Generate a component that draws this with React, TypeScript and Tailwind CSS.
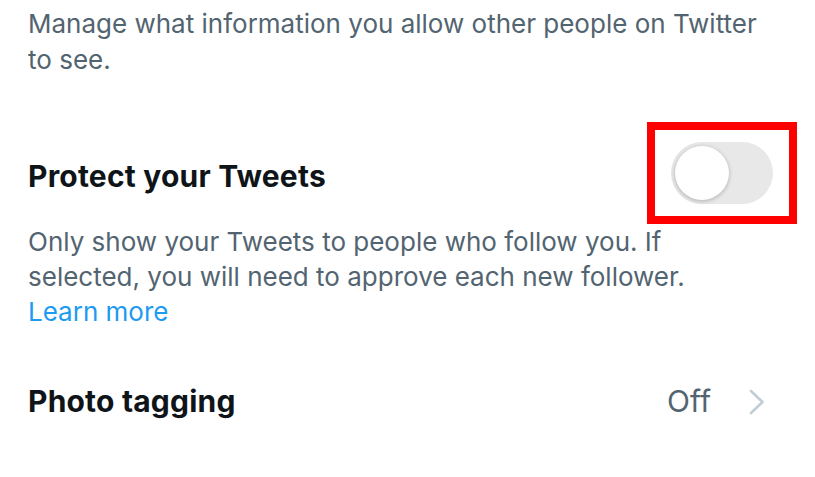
function Toggle() {
  return (
    <div className="mb-[6px] border-[8px] border-[#ff0000] px-[16px] py-[12px]">
      <div className="flex h-[62px] w-[102px] items-center rounded-full bg-[#e8e8e8] pl-[4px]">
        <div className="h-[54px] w-[54px] rounded-full bg-white shadow-[0_1px_4px_rgba(0,0,0,0.25)]" />
      </div>
    </div>
  );
}

function Chevron() {
  return (
    <svg width="16" height="26" viewBox="0 0 16 26" fill="none" className="text-[#c0ced6]">
      <polyline points="2,2 13.5,13 2,24" stroke="currentColor" strokeWidth="2.6" strokeLinecap="round" strokeLinejoin="round" />
    </svg>
  );
}

export default function App() {
  return (
    <div className="h-[477px] w-[815px] overflow-hidden bg-white font-['Inter',sans-serif] text-[#0f1419]">
      <p className="px-[28px] pt-[6px] text-[26px] leading-[36px] text-[#536471]">
        Manage what information you allow other people on Twitter
        <br />
        to see.
      </p>

      <div className="mt-[44px] flex items-center justify-between pl-[28px] pr-[18px]">
        <h2 className="text-[30px] font-bold tracking-[0.2px]">Protect your Tweets</h2>
        <Toggle />
      </div>

      <p className="mt-[-6px] px-[28px] text-[26px] leading-[35px] text-[#536471]">
        Only show your Tweets to people who follow you. If
        <br />
        selected, you will need to approve each new follower.
        <br />
        <a className="text-[#1d9bf0]">Learn more</a>
      </p>

      <div className="mt-[50px] flex items-center justify-between pl-[28px] pr-[50px]">
        <h2 className="text-[30px] font-bold tracking-[0.2px]">Photo tagging</h2>
        <div className="flex items-center gap-[38px]">
          <span className="text-[30px] text-[#536471]">Off</span>
          <Chevron />
        </div>
      </div>
    </div>
  );
}
